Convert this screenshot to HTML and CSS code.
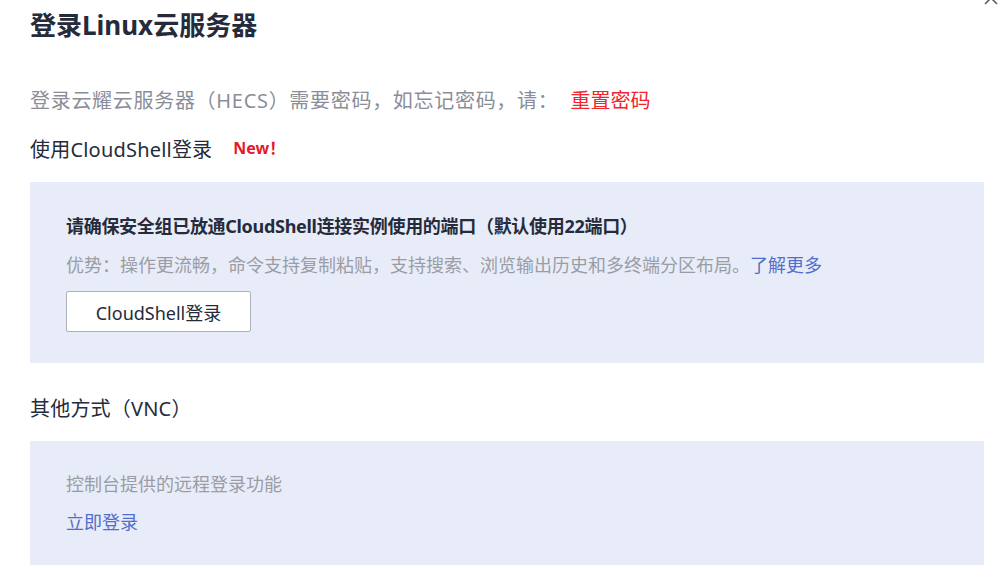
FILE: index.html
```html
<!DOCTYPE html>
<html lang="zh-CN">
<head>
<meta charset="utf-8">
<title>登录Linux云服务器</title>
<link rel="stylesheet" href="styles.css">
</head>
<body>
<div class="dialog">
  <svg class="close" width="16" height="16" viewBox="0 0 16 16" aria-hidden="true"><path d="M2 2 L14 14 M14 2 L2 14" stroke="#575d6c" stroke-width="1.6" fill="none"/></svg>
  <h1 class="title">登录Linux云服务器</h1>
  <p class="desc">登录云耀云服务器（HECS）需要密码，如忘记密码，请：<a class="reset">重置密码</a></p>
  <div class="section-title">使用CloudShell登录<span class="new">New！</span></div>
  <div class="panel panel-cs">
    <div class="panel-strong">请确保安全组已放通CloudShell连接实例使用的端口（默认使用22端口）</div>
    <div class="panel-text adv">优势：操作更流畅，命令支持复制粘贴，支持搜索、浏览输出历史和多终端分区布局。<a class="link">了解更多</a></div>
    <button class="btn">CloudShell登录</button>
  </div>
  <div class="section-title vnc">其他方式（VNC）</div>
  <div class="panel panel-vnc">
    <div class="panel-text">控制台提供的远程登录功能</div>
    <a class="link login">立即登录</a>
  </div>
</div>
</body>
</html>
```
FILE: styles.css
```css
* { box-sizing: border-box; }
html, body { margin: 0; padding: 0; background: #fff; }
body {
  font-family: "Noto Sans", "Noto Sans CJK SC", sans-serif;
  color: #252b3a;
}
.dialog {
  position: relative;
  padding: 0 18px 0 30px;
  width: 1002px;
}
.close {
  position: absolute;
  top: -10px;
  right: 3px;
}
.title {
  margin: 0;
  font-size: 26px;
  font-weight: 700;
  line-height: 50px;
  color: #252b3a;
}
.desc {
  margin: 36px 0 0;
  font-size: 20px;
  line-height: 30px;
  color: #8a8e99;
  letter-spacing: 0.7px;
}
.reset {
  color: #f0262c;
  margin-left: 12px;
  letter-spacing: 0;
}
.section-title {
  margin-top: 19px;
  font-size: 20px;
  line-height: 30px;
  color: #252b3a;
  display: flex;
  align-items: center;
  letter-spacing: 0.2px;
}
.new {
  color: #e6192b;
  font-weight: 700;
  font-size: 16px;
  margin-left: 21px;
  margin-top: -4px;
  letter-spacing: 0;
}
.panel {
  margin-top: 17px;
  background: #e8ecf8;
  padding: 30px 36px 31px;
  display: flex;
  flex-direction: column;
  align-items: flex-start;
}
.panel-strong {
  font-size: 18px;
  font-weight: 700;
  line-height: 28px;
  color: #252b3a;
  letter-spacing: -0.3px;
}
.panel-text {
  font-size: 18px;
  line-height: 28px;
  color: #9a9da5;
}
.adv { margin-top: 11px; }
.link { color: #526ecc; font-size: 18px; line-height: 28px; }
.btn {
  margin-top: 12px;
  width: 185px;
  height: 41px;
  background: #fff;
  border: 1px solid #adb0b8;
  border-radius: 2px;
  font-family: inherit;
  font-size: 18px;
  color: #252b3a;
  padding: 0;
}
.vnc { margin-top: 31px; }
.panel-vnc { padding: 29px 36px 29px; }
.login { margin-top: 10px; }
```
